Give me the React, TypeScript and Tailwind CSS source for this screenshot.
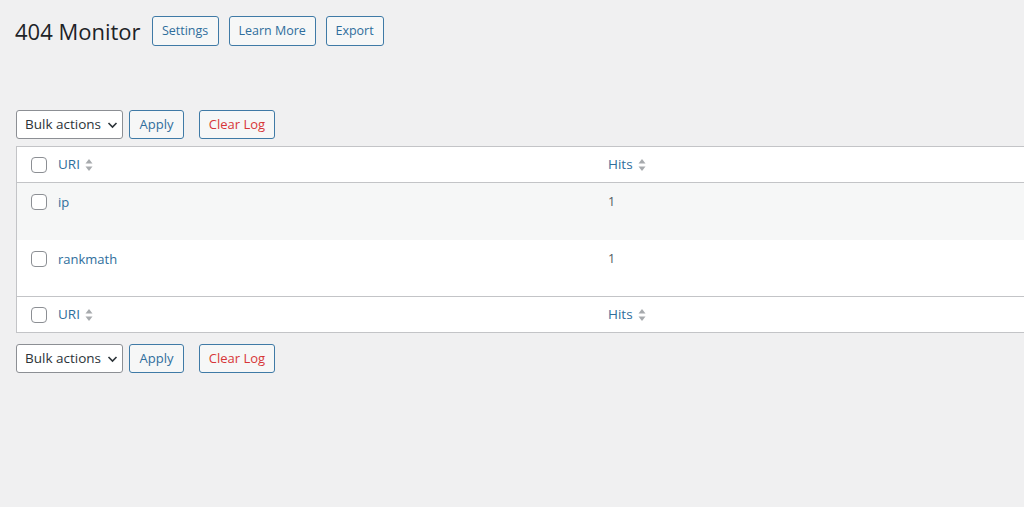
import React from "react";

type Row = { uri: string; hits: number };

const rows: Row[] = [
  { uri: "ip", hits: 1 },
  { uri: "rankmath", hits: 1 },
];

const SortIcon = () => (
  <svg width="8" height="14" viewBox="0 0 8 14" className="ml-[5px] inline-block">
    <path d="M4 1 L7.5 5.5 L0.5 5.5 Z" fill="#a7aaad" />
    <path d="M4 13 L7.5 8.5 L0.5 8.5 Z" fill="#a7aaad" />
  </svg>
);

const Checkbox = () => (
  <span className="block h-[16px] w-[16px] rounded-[4px] border border-[#8c8f94] bg-white" />
);

const ChevronDown = () => (
  <svg width="11" height="10" viewBox="0 0 11 10" className="ml-[6px]">
    <path d="M1.5 3 L5.5 7 L9.5 3" fill="none" stroke="#2c3338" strokeWidth="1.6" />
  </svg>
);

const TableNav = () => (
  <div className="flex items-center">
    <div className="flex h-[29px] w-[107px] items-center rounded-[3px] border border-[#8c8f94] bg-white pl-[8px] text-[13.5px] text-[#2c3338]">
      Bulk actions
      <ChevronDown />
    </div>
    <button className="ml-[6px] h-[29px] w-[55px] rounded-[3px] border border-[#3f7aa6] bg-[#f6f7f7] text-[13px] text-[#2f6e9c]">
      Apply
    </button>
    <button className="ml-[15px] h-[29px] w-[76px] rounded-[3px] border border-[#3f7aa6] bg-[#f6f7f7] text-[13px] text-[#d63638]">
      Clear Log
    </button>
  </div>
);

const HeaderRow = ({ top }: { top?: boolean }) => (
  <div
    className={`flex h-[36px] items-center bg-white ${
      top ? "border-b border-[#c3c4c7]" : "border-t border-[#c3c4c7]"
    }`}
  >
    <div className="flex w-[41px] justify-center pl-[2px]">
      <Checkbox />
    </div>
    <div className="flex w-[550px] items-center text-[13.5px] text-[#2f6e9c]">
      URI
      <SortIcon />
    </div>
    <div className="flex items-center text-[13.5px] text-[#2f6e9c]">
      Hits
      <SortIcon />
    </div>
  </div>
);

export default function App() {
  return (
    <div
      className="h-[507px] w-[1024px] overflow-hidden bg-[#f0f0f1] text-[#3c434a]"
      style={{ fontFamily: '"Open Sans", "Noto Sans", sans-serif' }}
    >
      <div className="pl-[15px] pt-[16px]">
        <div className="flex items-center">
          <h1 className="text-[22px] font-normal leading-[30px] text-[#1d2327]">404 Monitor</h1>
          <button className="ml-[11px] h-[30px] w-[67px] rounded-[3px] border border-[#3f7aa6] bg-[#f6f7f7] text-[12.5px] text-[#2f6e9c]">
            Settings
          </button>
          <button className="ml-[10px] h-[30px] w-[87px] rounded-[3px] border border-[#3f7aa6] bg-[#f6f7f7] text-[12.5px] text-[#2f6e9c]">
            Learn More
          </button>
          <button className="ml-[10px] h-[30px] w-[58px] rounded-[3px] border border-[#3f7aa6] bg-[#f6f7f7] text-[12.5px] text-[#2f6e9c]">
            Export
          </button>
        </div>

        <div className="ml-[1px] mt-[64px]">
          <TableNav />
        </div>

        <div className="ml-[1px] mt-[7px] w-[1030px] border border-[#c3c4c7] bg-white">
          <HeaderRow top />
          {rows.map((r, i) => (
            <div
              key={r.uri}
              className={`flex items-start pt-[10px] ${i % 2 === 0 ? "h-[57px] bg-[#f6f7f7]" : "h-[56px] bg-white"}`}
            >
              <div className="flex w-[41px] justify-center pl-[2px] pt-[1px]">
                <Checkbox />
              </div>
              <div className="w-[550px] text-[13px] text-[#2f6e9c]">{r.uri}</div>
              <span className="text-[12.5px] text-[#50575e]">{r.hits}</span>
            </div>
          ))}
          <HeaderRow />
        </div>

        <div className="ml-[1px] mt-[11px]">
          <TableNav />
        </div>
      </div>
    </div>
  );
}
